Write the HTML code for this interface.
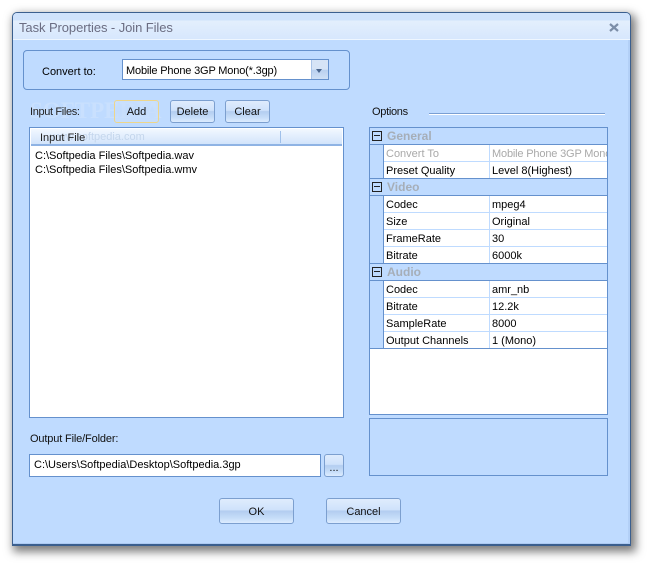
<!DOCTYPE html>
<html><head><meta charset="utf-8"><style>
html,body{margin:0;padding:0;background:#fff;width:650px;height:566px;overflow:hidden}
body{position:relative;font-family:"Liberation Sans",sans-serif;font-size:11px;color:#000}
div{position:absolute;box-sizing:border-box;white-space:nowrap}
#win{left:12px;top:12px;width:619px;height:534px;background:#bfdbff;border:1px solid #3b5f8e;border-bottom-width:2px;border-radius:5px 5px 0 0;box-shadow:3px 4px 9px 2px rgba(0,0,0,.5)}
#title{left:13px;top:13px;width:617px;height:27px;background:linear-gradient(#cfe2fb 0,#cfe2fb 7px,#e3effd 8px,#d7e7fd 100%);border-bottom:1px solid #eef6ff;border-radius:4px 4px 0 0}
.t{line-height:16px}
.btn{border:1px solid #7c9fcf;border-radius:3px;background:linear-gradient(#dfecfd 0,#cfe2fb 45%,#b3cdf0 50%,#c7def9 80%,#dcecff 100%);text-align:center;line-height:23px;color:#111}
.line{background:#6591cd}
.wl{background:#bfdbff}
.r{left:384px;width:223px;height:16px;background:#fff}
.c{line-height:18px;height:16px}
.h{font-weight:bold;color:#a6aeb8;left:387px;line-height:16px;font-size:12px}
.pm{left:372px;width:10px;height:10px;border:1px solid #222;background:#bfdbff}
.pm:after{content:"";position:absolute;left:1px;top:3px;width:6px;height:1px;background:#222}
</style></head><body>
<div id="win"></div>
<div id="title"></div>
<div style="left:628px;top:40px;width:2px;height:504px;background:#b3d0f7"></div>
<div style="left:13px;top:543px;width:617px;height:1px;background:#adcaf2"></div>
<div style="left:19px;top:21px;font-size:13px;line-height:14px;color:#6b6d82;letter-spacing:-.08px">Task Properties - Join Files</div>
<svg style="position:absolute;left:609px;top:23px" width="10" height="9"><path d="M1 1L9 8M9 1L1 8" stroke="#7c8ea8" stroke-width="2.2" fill="none"/></svg>

<div style="left:23px;top:50px;width:327px;height:40px;border:1px solid #6591cd;border-radius:4px"></div>
<div class="t" style="left:42px;top:64px">Convert to:</div>
<div style="left:122px;top:59px;width:207px;height:21px;background:#fff;border:1px solid #6591cd"></div>
<div class="t" style="left:126px;top:63px;letter-spacing:-.17px">Mobile Phone 3GP Mono(*.3gp)</div>
<div style="left:311px;top:60px;width:17px;height:19px;background:linear-gradient(#d6e4f6 0,#d6e4f6 50%,#b9d0ef 52%,#cfe0f6 100%);border-left:1px solid #a9c4e8"></div>
<div style="left:316px;top:69px;width:0;height:0;border-left:3.5px solid transparent;border-right:3.5px solid transparent;border-top:4px solid #4a668e"></div>

<div style="left:30px;top:98px;font-size:23px;line-height:26px;font-family:'Liberation Serif',serif;font-weight:bold;color:#c9e0fe">SOFTPEDIA</div>
<div class="t" style="left:30px;top:104px;color:#222;letter-spacing:-.35px">Input Files:</div>
<div class="btn" style="left:114px;top:100px;width:45px;height:23px;border-color:#eed68a;border-radius:3px;background:linear-gradient(rgba(206,226,252,.6),rgba(198,221,251,.6) 50%,rgba(203,224,252,.6))">Add</div>
<div class="btn" style="left:170px;top:100px;width:45px;height:23px">Delete</div>
<div class="btn" style="left:225px;top:100px;width:45px;height:23px">Clear</div>

<div style="left:29px;top:127px;width:315px;height:291px;background:#fff;border:1px solid #6591cd"></div>
<div style="left:31px;top:129px;width:311px;height:17px;background:linear-gradient(#f2f8ff,#d2e4fb);border-bottom:2px solid #8fb3e4"></div>
<div style="left:280px;top:131px;width:1px;height:12px;background:#9fc0ea"></div>
<div class="t" style="left:50px;top:129px;color:#c4d6ec;font-size:11px">www.softpedia.com</div>
<div class="t" style="left:40px;top:130px;color:#222">Input File</div>
<div class="t" style="left:35px;top:148px">C:\Softpedia Files\Softpedia.wav</div>
<div class="t" style="left:35px;top:162px">C:\Softpedia Files\Softpedia.wmv</div>

<div class="t" style="left:30px;top:431px;color:#111;letter-spacing:-.15px">Output File/Folder:</div>
<div style="left:29px;top:454px;width:292px;height:23px;background:#fff;border:1px solid #6591cd"></div>
<div class="t" style="left:34px;top:457px">C:\Users\Softpedia\Desktop\Softpedia.3gp</div>
<div class="btn" style="left:324px;top:454px;width:20px;height:23px;line-height:26px">...</div>
<div class="btn" style="left:219px;top:498px;width:75px;height:26px;line-height:26px">OK</div>
<div class="btn" style="left:326px;top:498px;width:75px;height:26px;line-height:26px">Cancel</div>

<div class="t" style="left:372px;top:104px;color:#111;letter-spacing:-.3px">Options</div>
<div style="left:429px;top:113px;width:176px;height:2px;background:linear-gradient(#7a9fd3 50%,#fff 50%)"></div>

<div style="left:369px;top:127px;width:239px;height:288px;background:#fff;border:1px solid #6591cd"></div>
<div style="left:370px;top:128px;width:237px;height:220px;background:#bfdbff"></div>

<div class="r" style="top:145px"></div>
<div class="r" style="top:162px"></div>
<div class="r" style="top:196px"></div>
<div class="r" style="top:213px"></div>
<div class="r" style="top:230px"></div>
<div class="r" style="top:247px"></div>
<div class="r" style="top:281px"></div>
<div class="r" style="top:298px"></div>
<div class="r" style="top:315px"></div>
<div class="r" style="top:332px"></div>

<div class="line" style="left:370px;top:144px;width:237px;height:1px"></div>
<div class="line" style="left:370px;top:178px;width:237px;height:1px"></div>
<div class="line" style="left:370px;top:195px;width:237px;height:1px"></div>
<div class="line" style="left:370px;top:263px;width:237px;height:1px"></div>
<div class="line" style="left:370px;top:280px;width:237px;height:1px"></div>
<div class="line" style="left:370px;top:348px;width:237px;height:1px"></div>
<div class="line" style="left:383px;top:145px;width:1px;height:33px"></div>
<div class="line" style="left:383px;top:196px;width:1px;height:67px"></div>
<div class="line" style="left:383px;top:281px;width:1px;height:67px"></div>

<div class="wl" style="left:489px;top:145px;width:1px;height:33px"></div>
<div class="wl" style="left:489px;top:196px;width:1px;height:67px"></div>
<div class="wl" style="left:489px;top:281px;width:1px;height:67px"></div>
<div class="wl" style="left:384px;top:161px;width:223px;height:1px"></div>
<div class="wl" style="left:384px;top:212px;width:223px;height:1px"></div>
<div class="wl" style="left:384px;top:229px;width:223px;height:1px"></div>
<div class="wl" style="left:384px;top:246px;width:223px;height:1px"></div>
<div class="wl" style="left:384px;top:297px;width:223px;height:1px"></div>
<div class="wl" style="left:384px;top:314px;width:223px;height:1px"></div>
<div class="wl" style="left:384px;top:331px;width:223px;height:1px"></div>

<div class="pm" style="top:131px"></div>
<div class="pm" style="top:182px"></div>
<div class="pm" style="top:267px"></div>
<div class="h" style="top:128px">General</div>
<div class="h" style="top:179px">Video</div>
<div class="h" style="top:264px">Audio</div>

<div class="c" style="left:386px;top:145px;color:#a9a9a9">Convert To</div>
<div class="c" style="left:492px;top:145px;color:#a9a9a9;width:115px;overflow:hidden;letter-spacing:-.17px">Mobile Phone 3GP Mono</div>
<div class="c" style="left:386px;top:162px">Preset Quality</div>
<div class="c" style="left:492px;top:162px">Level 8(Highest)</div>
<div class="c" style="left:386px;top:196px">Codec</div>
<div class="c" style="left:492px;top:196px">mpeg4</div>
<div class="c" style="left:386px;top:213px">Size</div>
<div class="c" style="left:492px;top:213px">Original</div>
<div class="c" style="left:386px;top:230px">FrameRate</div>
<div class="c" style="left:492px;top:230px">30</div>
<div class="c" style="left:386px;top:247px">Bitrate</div>
<div class="c" style="left:492px;top:247px">6000k</div>
<div class="c" style="left:386px;top:281px">Codec</div>
<div class="c" style="left:492px;top:281px">amr_nb</div>
<div class="c" style="left:386px;top:298px">Bitrate</div>
<div class="c" style="left:492px;top:298px">12.2k</div>
<div class="c" style="left:386px;top:315px">SampleRate</div>
<div class="c" style="left:492px;top:315px">8000</div>
<div class="c" style="left:386px;top:332px">Output Channels</div>
<div class="c" style="left:492px;top:332px">1 (Mono)</div>

<div style="left:369px;top:418px;width:239px;height:58px;border:1px solid #6591cd"></div>
</body></html>
